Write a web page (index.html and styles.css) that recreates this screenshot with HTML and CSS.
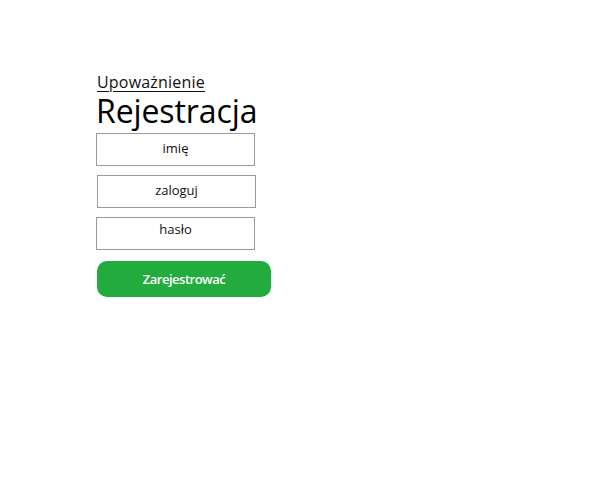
FILE: index.html
```html
<!DOCTYPE html>
<html lang="pl">
<head>
<meta charset="utf-8">
<link rel="stylesheet" href="styles.css">
</head>
<body>
<div class="page">
  <form class="form">
    <a class="link">Upoważnienie</a>
    <h1 class="title">Rejestracja</h1>
    <div class="field">imię</div>
    <div class="field field-shift">zaloguj</div>
    <div class="field field-high">hasło</div>
    <button class="submit" type="button">Zarejestrować</button>
  </form>
</div>
</body>
</html>
```

FILE: styles.css
```css
html, body {
  margin: 0;
  padding: 0;
  background: #fff;
}
.page {
  padding: 72px 0 0 96px;
  font-family: "Open Sans", "Noto Sans", sans-serif;
  color: #111;
}
.form {
  display: flex;
  flex-direction: column;
  align-items: flex-start;
}
.link {
  font-size: 16px;
  line-height: 20px;
  margin-left: 1px;
  text-decoration: underline;
  text-underline-offset: 3px;
  text-decoration-thickness: 1px;
  color: #111;
  letter-spacing: 0.2px;
}
.title {
  margin: 1px 0 2px;
  font-size: 32px;
  font-weight: 400;
  line-height: 36px;
  letter-spacing: -0.1px;
  color: #000;
}
.field {
  box-sizing: border-box;
  width: 159px;
  height: 33px;
  border: 1px solid #9a9a9a;
  margin-top: 2px;
  margin-bottom: 7px;
  display: flex;
  justify-content: center;
  padding-top: 5px;
  font-size: 13px;
  line-height: 18px;
  color: #111;
}
.field-shift {
  margin-left: 1px;
}
.field-high {
  padding-top: 2px;
}
.submit {
  margin-top: 4px;
  margin-left: 1px;
  width: 174px;
  height: 36px;
  border: none;
  border-radius: 10px;
  background: #22ac3e;
  color: #fff;
  font-family: "Open Sans", "Noto Sans", sans-serif;
  font-size: 13px;
  font-weight: 600;
  letter-spacing: -0.5px;
  padding: 0 0 1px;
}
```
